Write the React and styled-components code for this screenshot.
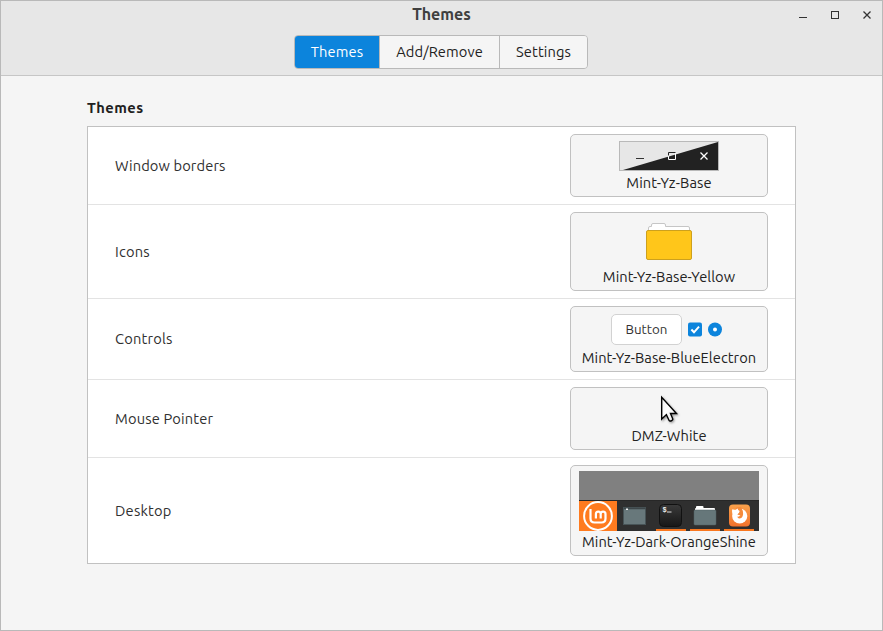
import React from "react";
import styled, { createGlobalStyle } from "styled-components";

const GlobalStyle = createGlobalStyle`
  * { box-sizing: border-box; }
  body { margin: 0; }
`;

const Window = styled.div`
  width: 883px;
  height: 631px;
  border: 1px solid #b9b9b9;
  background: #f5f5f5;
  font-family: Ubuntu, "Noto Sans", sans-serif;
  font-size: 14.667px;
  color: #303030;
  overflow: hidden;
`;

const Header = styled.header`
  height: 75px;
  background: #e7e7e7;
  border-bottom: 1px solid #c6c6c6;
  display: flex;
  flex-direction: column;
  align-items: center;
`;

const TitleBar = styled.div`
  width: 100%;
  height: 34px;
  display: grid;
  grid-template-columns: 1fr auto 1fr;
`;

const Title = styled.h1`
  grid-column: 2;
  margin: 0;
  font-size: 16px;
  line-height: 26px;
  font-weight: 700;
  color: #404040;
`;

const WindowControls = styled.div`
  justify-self: end;
  display: flex;
  gap: 16px;
  padding: 6px 7px 0 0;
`;

const ControlButton = styled.button`
  width: 16px;
  height: 16px;
  padding: 0;
  border: 0;
  background: none;
  display: block;
  svg { display: block; }
`;

const Tabs = styled.nav`
  display: flex;
  width: 294px;
  height: 34px;
  margin-right: 1px;
  border: 1px solid #b9b9b9;
  border-radius: 4px;
  overflow: hidden;
`;

const Tab = styled.button`
  width: ${(p) => p.$width}px;
  padding: 0 0 2px;
  border: 0;
  border-left: ${(p) => (p.$active ? "0" : "1px solid #b9b9b9")};
  background: ${(p) => (p.$active ? "#0c84dc" : "#f5f5f5")};
  color: ${(p) => (p.$active ? "#fff" : "#222")};
  font: inherit;
  letter-spacing: 0.1px;
`;

const Content = styled.main`
  padding: 22px 86px 0;
`;

const SectionTitle = styled.h2`
  margin: 0;
  height: 28px;
  font-size: 14.667px;
  line-height: 20px;
  font-weight: 700;
  letter-spacing: 0.45px;
  color: #202020;
`;

const List = styled.section`
  width: 709px;
  border: 1px solid #c1c1c1;
  background: #fff;
`;

const Row = styled.div`
  display: flex;
  align-items: center;
  justify-content: space-between;
  padding: 7px 27px;
  & + & { border-top: 1px solid #e3e3e3; }
`;

const RowLabel = styled.span`
  line-height: 20px;
  letter-spacing: ${(p) => p.$spacing}px;
`;

const Chooser = styled.button`
  width: 198px;
  padding: 5px 0 4px;
  border: 1px solid #c1c1c1;
  border-radius: 5px;
  background: #f5f5f5;
  color: #222;
  font: inherit;
  display: flex;
  flex-direction: column;
  align-items: center;
`;

const Preview = styled.span`
  height: ${(p) => p.$height}px;
  display: flex;
  align-items: center;
  justify-content: center;
  svg { display: block; }
`;

const ChooserName = styled.span`
  height: 20px;
  line-height: 22px;
  white-space: nowrap;
  letter-spacing: ${(p) => p.$spacing}px;
`;

const ControlsPreview = styled.span`
  display: flex;
  align-items: center;
  gap: 6px;
  padding-right: 5px;
`;

const SampleButton = styled.span`
  width: 71px;
  height: 31px;
  border: 1px solid #d2d2d2;
  border-radius: 5px;
  background: #fff;
  color: #333;
  font-size: 13.333px;
  line-height: 29px;
  text-align: center;
`;

const BordersArt = () => (
  <svg width="100" height="30" viewBox="0 0 100 30" fill="none">
    <rect x=".5" y=".5" width="99" height="29" fill="#e7e7e7" />
    <path d="M4 29 99 1v28Z" fill="#222" />
    <rect x=".5" y=".5" width="99" height="29" stroke="#b9b9b9" />
    <path d="M17 17.500h8" stroke="#333" />
    <path d="M49.500 15v-3.500h7" stroke="#222" />
    <path d="M49.500 14.500v4h7v-6.500" stroke="#fff" />
    <path d="m81.500 11.500 7 7m0-7-7 7" stroke="#fff" strokeWidth="1.300" />
  </svg>
);

const FolderArt = () => (
  <svg width="48" height="48" viewBox="0 0 48 48">
    <path d="M3.500 13V10q0-1.500 1.500-1.500h1.500V7q0-1.500 1.500-1.500h11q1.500 0 1.500 1.500v1.500H43q1.500 0 1.500 1.500v3Z" fill="#fff" stroke="#c6c6c6" />
    <rect x="1.500" y="12.500" width="45" height="29" rx="1.500" fill="#ffc61a" stroke="#cda01d" />
  </svg>
);

const CheckArt = () => (
  <svg width="14" height="15" viewBox="0 0 14 15">
    <rect y=".5" width="14" height="14" rx="2" fill="#0c84dc" />
    <path d="m3.400 7.500 2.600 2.800 5-5.600" fill="none" stroke="#fff" strokeWidth="2" />
  </svg>
);

const RadioArt = () => (
  <svg width="14" height="15" viewBox="0 0 14 15">
    <circle cx="7" cy="7.500" r="7" fill="#0c84dc" />
    <circle cx="7" cy="7.500" r="2" fill="#fff" />
  </svg>
);

const PointerArt = () => (
  <svg width="32" height="32" viewBox="0 0 32 32">
    <defs>
      <linearGradient id="pointer" x2="1" y2="1">
        <stop offset="0" stopColor="#eee" />
        <stop offset=".45" stopColor="#fff" />
        <stop offset="1" stopColor="#e4e4e4" />
      </linearGradient>
      <filter id="pointerShade" x="-30%" y="-30%" width="180%" height="180%">
        <feDropShadow dx="1" dy="1.200" stdDeviation=".8" floodOpacity=".4" />
      </filter>
    </defs>
    <path d="M8.700 4.400V26.100l4.700-4.500 2.600 5.600c.7 1.500 4.500.4 3.700-1.500L17.500 20.500h6Z" fill="url(#pointer)" stroke="#000" strokeWidth="1.400" filter="url(#pointerShade)" />
  </svg>
);

const DesktopArt = () => (
  <svg width="180" height="60" viewBox="0 0 180 60" fill="none">
    <defs>
      <linearGradient id="term" x2="0" y2="1">
        <stop stopColor="#3a3a3a" />
        <stop offset="1" stopColor="#171717" />
      </linearGradient>
      <linearGradient id="fox" x2="0" y2="1">
        <stop stopColor="#f9a14b" />
        <stop offset="1" stopColor="#f3722c" />
      </linearGradient>
    </defs>
    <rect width="180" height="30" fill="#808080" />
    <rect y="29" width="180" height="31" fill="#2f2f2f" />
    <path d="M0 29.500h180" stroke="#272727" />
    <rect y="30" width="38" height="30" fill="#ff7b1f" />
    <circle cx="19" cy="45" r="13.900" stroke="#fff" strokeWidth="2" />
    <path d="M11.500 38v9.500q0 4 4 4h7q4 0 4-4V43q0-2.400-2.400-2.400T21.700 43v4.500M21.700 43q0-2.400-2.400-2.400T16.900 43v4.500" stroke="#fff" strokeWidth="2.200" />
    <rect x="44.500" y="36.500" width="22" height="17" fill="#68787b" stroke="#485457" />
    <path d="M45 37.500h21.500" stroke="#3d4649" strokeWidth="1.500" />
    <rect x="47" y="37.500" width="2" height="1.500" fill="#eee" />
    <rect x="80.500" y="33.500" width="22" height="22" rx="4" fill="url(#term)" stroke="#111" />
    <text x="83.500" y="41" fill="#eee" fontFamily="Liberation Mono, monospace" fontSize="7" fontWeight="700">$</text>
    <path d="M88 41h4.500" stroke="#ddd" />
    <path d="M116 40v-2q0-1 1-1V36q0-1 1-1h5.500q1 0 1 1v1H135q1 0 1 1v2Z" fill="#fff" />
    <rect x="115" y="39" width="22" height="15" rx="1" fill="#66777a" stroke="#506064" strokeWidth=".5" />
    <rect x="150" y="33.500" width="21" height="22" rx="4" fill="url(#fox)" />
    <circle cx="160.700" cy="45" r="7.600" fill="#fff" />
    <path d="M156.500 37q2.500-1.500 5.500-1 2.700 4.300 1.900 8.200-.9 3.600-4 3.300-1.500-.4-1.500-1.900 1.700.4 3-1-1.600-.9-3-.8.600-1.500 2-2.300-1.600-1.200-1.500-2.300-1.500.3-2.400-2.200Z" fill="#f58b3c" />
    <path d="M153.300 38.300c1.400.5 2.600.3 3.700.8.400-1 1-1.500 1.700-1.700 0 1.300.8 2 2 2.500 0 1.200-1.600 1.200-2 2.500l-4 2.600c-1.700-2-2-4.700-1.400-6.700Z" fill="#fff" />
    <path d="M77 59h30M111 59h30M145 59h30" stroke="#f9771f" strokeWidth="2" />
  </svg>
);

const ControlsArt = () => (
  <ControlsPreview>
    <SampleButton>Button</SampleButton>
    <CheckArt />
    <RadioArt />
  </ControlsPreview>
);

const tabs = [
  { label: "Themes", width: 84, active: true },
  { label: "Add/Remove", width: 120 },
  { label: "Settings", width: 88 },
];

const rows = [
  { label: "Window borders", spacing: 0.12, name: "Mint-Yz-Base", nameSpacing: 0.1, height: 32, Art: BordersArt },
  { label: "Icons", spacing: 0.2, name: "Mint-Yz-Base-Yellow", nameSpacing: 0.05, height: 48, Art: FolderArt },
  { label: "Controls", spacing: 0.2, name: "Mint-Yz-Base-BlueElectron", nameSpacing: 0.05, height: 35, Art: ControlsArt },
  { label: "Mouse Pointer", spacing: 0.17, name: "DMZ-White", nameSpacing: 0.1, height: 32, Art: PointerArt },
  { label: "Desktop", spacing: 0.22, name: "Mint-Yz-Dark-OrangeShine", nameSpacing: 0.03, height: 60, Art: DesktopArt },
];

export default function App() {
  return (
    <>
      <GlobalStyle />
      <Window>
        <Header>
          <TitleBar>
            <Title>Themes</Title>
            <WindowControls>
              <ControlButton aria-label="Minimize">
                <svg width="16" height="16"><path d="M4 10.500h8" stroke="#333" /></svg>
              </ControlButton>
              <ControlButton aria-label="Maximize">
                <svg width="16" height="16"><rect x="4.500" y="4.500" width="7" height="7" fill="none" stroke="#333" /></svg>
              </ControlButton>
              <ControlButton aria-label="Close">
                <svg width="16" height="16"><path d="m4.500 4.500 7 7m0-7-7 7" stroke="#333" strokeWidth="1.300" /></svg>
              </ControlButton>
            </WindowControls>
          </TitleBar>
          <Tabs>
            {tabs.map((t) => (
              <Tab key={t.label} $width={t.width} $active={t.active}>{t.label}</Tab>
            ))}
          </Tabs>
        </Header>
        <Content>
          <SectionTitle>Themes</SectionTitle>
          <List>
            {rows.map(({ label, spacing, name, nameSpacing, height, Art }) => (
              <Row key={label}>
                <RowLabel $spacing={spacing}>{label}</RowLabel>
                <Chooser>
                  <Preview $height={height}><Art /></Preview>
                  <ChooserName $spacing={nameSpacing}>{name}</ChooserName>
                </Chooser>
              </Row>
            ))}
          </List>
        </Content>
      </Window>
    </>
  );
}
